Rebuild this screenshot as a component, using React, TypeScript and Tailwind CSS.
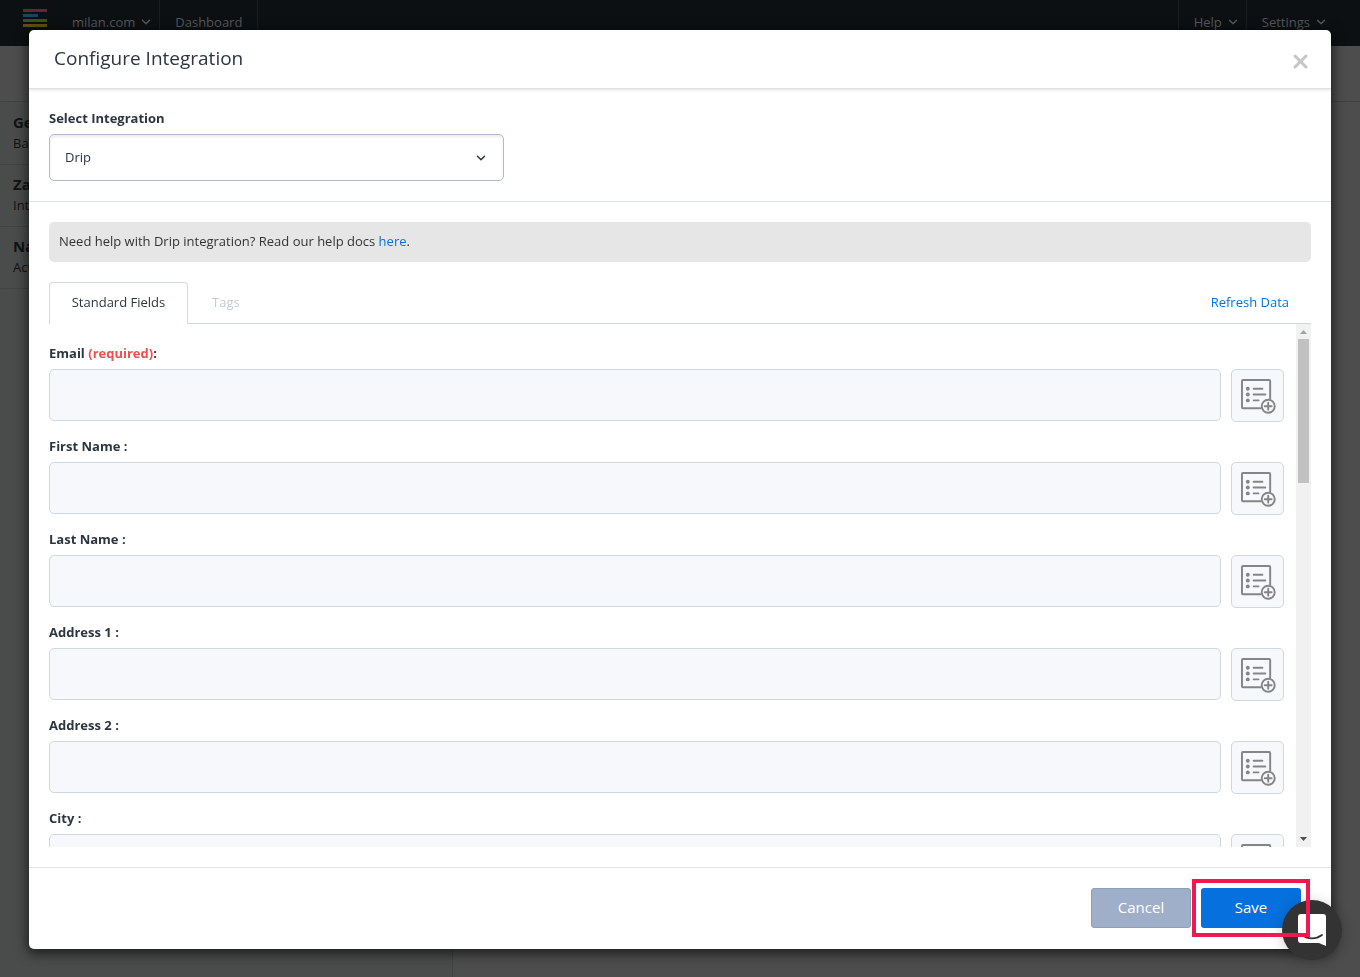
import { useState } from 'react';
import { ChevronDown } from 'lucide-react';

const FIELDS = ['Email', 'First Name', 'Last Name', 'Address 1', 'Address 2', 'City'];

const SIDEBAR = [
  { title: 'Gen', sub: 'Basic' },
  { title: 'Zap', sub: 'Integrate' },
  { title: 'Nat', sub: 'Active' },
];

function Logo() {
  return (
    <svg width="24" height="18" viewBox="0 0 24 18" aria-hidden="true">
      <rect width="24" height="3" fill="#64272b" />
      <rect y="5" width="15" height="3" fill="#17455d" />
      <rect y="10" width="24" height="3" fill="#3b5215" />
      <rect y="15" width="24" height="3" fill="#5d5110" />
    </svg>
  );
}

function ListAddIcon() {
  return (
    <svg width="35" height="35" viewBox="0 0 36 36" fill="none" stroke="#858585" strokeWidth="2" strokeLinecap="round" aria-hidden="true">
      <path d="M30 20V2a1 1 0 0 0-1-1H2a1 1 0 0 0-1 1v27a1 1 0 0 0 1 1h18" />
      <path d="M13 10h9M13 16h12M13 22h5" />
      <g fill="#858585" stroke="none">
        <circle cx="7" cy="10" r="2" />
        <circle cx="7" cy="16" r="2" />
        <circle cx="7" cy="22" r="2" />
      </g>
      <circle cx="28" cy="28" r="6.7" />
      <path d="M28 24.5v7M24.5 28h7" />
    </svg>
  );
}

function NavItem({ label, menu }: { label: string; menu?: boolean }) {
  return (
    <a href="#" className="flex items-center gap-1 pt-3 text-[13px] leading-5">
      {label}
      {menu && <ChevronDown size={14} strokeWidth={2.5} />}
    </a>
  );
}

function Background() {
  return (
    <div className="flex min-h-screen flex-col bg-[#4d4d4d]">
      <nav className="flex h-[46px] justify-between bg-[#0d1013] pr-8 pl-[23px] text-[#55585b]">
        <div className="flex">
          <div className="pt-[9px] pr-[25px]"><Logo /></div>
          <div className="border-r border-[#1b1e21] pr-[6px]"><NavItem label="milan.com" menu /></div>
          <div className="border-r border-[#1b1e21] px-[15px]"><NavItem label="Dashboard" /></div>
        </div>
        <div className="flex">
          <div className="border-l border-[#1b1e21] pr-[6px] pl-[15px]"><NavItem label="Help" menu /></div>
          <div className="border-l border-[#1b1e21] pl-[15px]"><NavItem label="Settings" menu /></div>
        </div>
      </nav>
      <div className="h-14 border-b border-[#404243]" />
      <div className="flex flex-1">
        <aside className="w-[453px] border-r border-[#404243] bg-[#4a4c4b] pt-px">
          {SIDEBAR.map((item) => (
            <div key={item.title} className="h-[62px] border-b border-[#404243] px-[13px] pt-[9px] text-[#101213]">
              <p className="text-[15px] leading-5 font-bold">{item.title}</p>
              <p className="text-[13px] leading-[22px]">{item.sub}</p>
            </div>
          ))}
        </aside>
      </div>
    </div>
  );
}

function Field({ name }: { name: string }) {
  const id = name.toLowerCase().replace(' ', '-');
  return (
    <div>
      <label htmlFor={id} className="mb-[7px] block text-[13px] leading-[18px] font-bold">
        {name} {name === 'Email' ? <><span className="text-[#f04e4e]">(required)</span>:</> : ':'}
      </label>
      <div className="flex gap-[10px]">
        <input id={id} className="h-[52px] min-w-0 flex-1 rounded-[5px] border border-[#ced8e0] bg-[#f6f8fb] px-4" />
        <button aria-label={`Insert field for ${name}`} className="flex size-[53px] items-center justify-center rounded-[5px] border border-[#ced8e0] bg-[#f6f8fb] pt-0.5 pl-0.5">
          <ListAddIcon />
        </button>
      </div>
    </div>
  );
}

function Scrollbar() {
  return (
    <div className="flex w-[15px] shrink-0 flex-col items-center justify-between bg-[#f1f1f1]" aria-hidden="true">
      <div className="flex flex-col items-center">
        <svg width="15" height="15" viewBox="0 0 15 15"><path d="M4 10l3.5-4 3.5 4z" fill="#a3a3a3" /></svg>
        <div className="h-36 w-[11px] bg-[#c1c1c1]" />
      </div>
      <svg width="15" height="15" viewBox="0 0 15 15"><path d="M4 5l3.5 4L11 5z" fill="#505050" /></svg>
    </div>
  );
}

export default function App() {
  const [tab, setTab] = useState('standard');

  return (
    <div className="font-['Open_Sans','Noto_Sans',sans-serif] text-[13px] text-[#2b3640]">
      <Background />

      {/* Modal */}
      <div className="fixed inset-0 px-[29px] pt-[30px] pb-7">
        <div role="dialog" aria-labelledby="modal-title" className="flex h-full flex-col rounded-[5px] bg-white shadow-[0_3px_12px_2px_rgba(0,0,0,0.6)]">
          <header className="flex h-[59px] shrink-0 items-center justify-between border-b border-[#dfe1e3] pr-[22px] pl-[25px] shadow-[0_1px_3px_rgba(0,0,0,0.12)]">
            <h1 id="modal-title" className="pb-0.5 text-[19px] leading-6">Configure Integration</h1>
            <button aria-label="Close" className="pt-1">
              <svg width="17" height="17" viewBox="0 0 17 17" stroke="#c6c6c6" strokeWidth="3" strokeLinecap="round">
                <path d="M3 3l11 11M14 3L3 14" />
              </svg>
            </button>
          </header>

          <section className="shrink-0 border-b border-[#dfe3e7] p-5">
            <label htmlFor="integration" className="mb-[7px] block text-[13px] leading-[18px] font-bold">Select Integration</label>
            <div className="relative w-[455px] max-w-full">
              <select id="integration" className="h-[47px] w-full appearance-none rounded-[5px] border border-[#adbdcc] bg-white px-[15px] shadow-[inset_0_2px_3px_rgba(0,0,0,0.08)]">
                <option>Drip</option>
              </select>
              <ChevronDown size={14} strokeWidth={2.5} className="pointer-events-none absolute top-[17px] right-4" />
            </div>
          </section>

          <section className="flex min-h-0 flex-1 flex-col p-5">
            <p className="mb-5 h-10 shrink-0 rounded-[5px] bg-[#e6e6e6] px-[10px] leading-[38px] text-[#333]">
              Need help with Drip integration? Read our help docs <a href="#" className="text-[#0670de]">here</a>.
            </p>

            <div className="flex shrink-0 leading-5" role="tablist">
              <button role="tab" aria-selected={tab === 'standard'} onClick={() => setTab('standard')} className="h-[42px] w-[139px] rounded-t-[4px] border border-b-0 border-[#d5dadf] pb-[3px]">
                Standard Fields
              </button>
              <div className="flex flex-1 items-center justify-between border-b border-[#ced8e0] pr-[22px] pb-0.5 pl-6">
                <button role="tab" aria-selected={tab === 'tags'} onClick={() => setTab('tags')} className="text-[#c3ccd2]">Tags</button>
                <a href="#" className="text-[#0670de]">Refresh Data</a>
              </div>
            </div>

            <div className="flex min-h-0 flex-1">
              <div className="flex min-w-0 flex-1 flex-col gap-[15px] overflow-y-auto pt-5 pr-3 [scrollbar-width:none]">
                {FIELDS.map((name) => <Field key={name} name={name} />)}
              </div>
              <Scrollbar />
            </div>
          </section>

          <footer className="flex h-[82px] shrink-0 justify-end gap-[10px] border-t border-[#dfe1e3] pt-5 pr-[30px] text-[15px]">
            <button className="h-10 w-[100px] rounded-[3px] border border-[#8da0b6] bg-[#9fafc9] pb-0.5 text-white">Cancel</button>
            <button className="h-10 w-[100px] rounded-[3px] bg-[#0670de] pb-0.5 text-white">Save</button>
          </footer>
        </div>
      </div>

      {/* Chat launcher, with the highlight frame round Save over it */}
      <button aria-label="Open chat" className="fixed right-[18px] bottom-[17px] flex size-[60px] items-center justify-center rounded-full bg-[#333] shadow-[0_2px_14px_rgba(0,0,0,0.2)]">
        <svg width="28" height="32" viewBox="0 0 28 32">
          <path d="M3 0h22a3 3 0 0 1 3 3v29c-3-1-6-3-8-3H3a3 3 0 0 1-3-3V3a3 3 0 0 1 3-3z" fill="#fff" />
          <path d="M4 21c6 4.5 14 4.5 20 0" fill="none" stroke="#333" strokeWidth="1.8" strokeLinecap="round" />
        </svg>
      </button>
      <div className="pointer-events-none fixed right-[50px] bottom-10 h-[58px] w-[118px] border-4 border-[#f0184f]" />
    </div>
  );
}
